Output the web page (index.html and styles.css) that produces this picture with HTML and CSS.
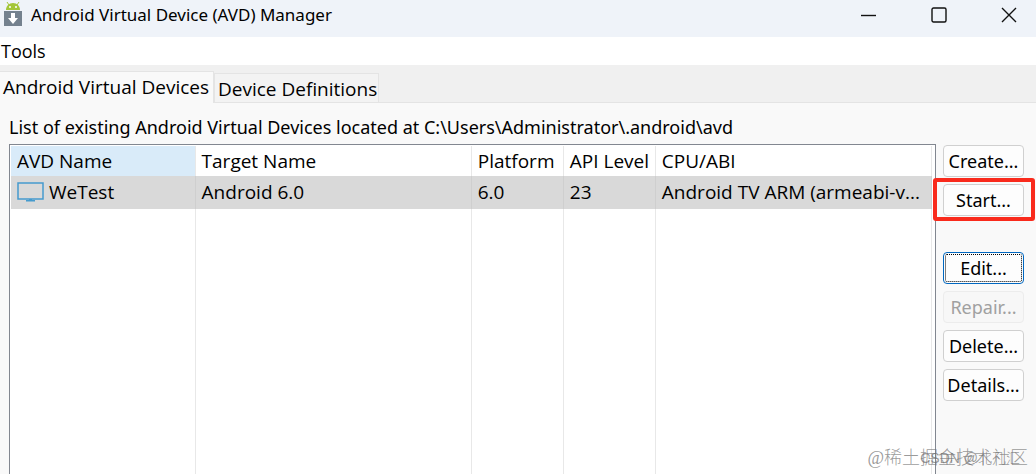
FILE: index.html
```
<!DOCTYPE html>
<html lang="en">

<head>
    <meta charset="UTF-8">
    <meta name="viewport" content="width=device-width, initial-scale=1.0">
    <title>Android Virtual Device (AVD) Manager</title>
    <link rel="stylesheet" href="styles.css">
</head>

<body>
    <header class="titlebar">
        <svg class="app-icon" width="20" height="26" viewBox="0 0 20 26">
            <path d="M4 2L6 5M16 2L14 5" stroke="#a4c639" stroke-width="1" />
            <path d="M3 10C3 6 6 3 10 3S17 6 17 10Z" fill="#a4c639" />
            <circle cx="7" cy="7" r="1" fill="#fff" />
            <circle cx="13" cy="7" r="1" fill="#fff" />
            <path d="M1 11H19V26H1Z" fill="#74818e" />
            <path d="M8 13H12V18H15L10 24L5 18H8Z" fill="#fff" />
        </svg>
        <h1>Android Virtual Device (AVD) Manager</h1>
        <div class="window-buttons">
            <button type="button" aria-label="Minimize">
                <svg width="16" height="16" viewBox="0 0 16 16"><path d="M0 8.5H15" /></svg>
            </button>
            <button type="button" aria-label="Maximize">
                <svg width="16" height="16" viewBox="0 0 16 16"><rect x="1" y="1" width="14" height="14" rx="1.5" /></svg>
            </button>
            <button type="button" aria-label="Close">
                <svg width="16" height="16" viewBox="0 0 16 16"><path d="M1 1L15 15M15 1L1 15" /></svg>
            </button>
        </div>
    </header>

    <nav class="menubar">
        <button type="button">Tools</button>
    </nav>

    <div class="tabs" role="tablist">
        <button type="button" class="tab active" role="tab" aria-selected="true">Android Virtual Devices</button>
        <button type="button" class="tab" role="tab" aria-selected="false">Device Definitions</button>
    </div>

    <main class="panel">
        <p class="location">List of existing Android Virtual Devices located at C:\Users\Administrator\.android\avd</p>
        <div class="content">
            <div class="list">
                <table>
                    <colgroup>
                        <col class="col-name">
                        <col class="col-target">
                        <col class="col-small">
                        <col class="col-small">
                        <col class="col-cpu">
                    </colgroup>
                    <thead>
                        <tr>
                            <th class="sorted">AVD Name</th>
                            <th>Target Name</th>
                            <th>Platform</th>
                            <th>API Level</th>
                            <th>CPU/ABI</th>
                        </tr>
                    </thead>
                    <tbody>
                        <tr class="selected">
                            <td>
                                <div class="device">
                                    <svg width="27" height="20" viewBox="0 0 27 20">
                                        <path d="M1 1H26V17H1Z" fill="none" stroke="#459bce" stroke-width="1.5" />
                                        <path d="M12 17H15V18H18V19.5H9V18H12Z" fill="#459bce" />
                                    </svg>
                                    WeTest
                                </div>
                            </td>
                            <td>Android 6.0</td>
                            <td>6.0</td>
                            <td>23</td>
                            <td>Android TV ARM (armeabi-v...</td>
                        </tr>
                        <tr class="filler">
                            <td></td>
                            <td></td>
                            <td></td>
                            <td></td>
                            <td></td>
                        </tr>
                    </tbody>
                </table>
            </div>
            <div class="actions">
                <button type="button">Create...</button>
                <button type="button" class="start">Start...</button>
                <button type="button" class="focused">Edit...</button>
                <button type="button" disabled>Repair...</button>
                <button type="button">Delete...</button>
                <button type="button">Details...</button>
            </div>
        </div>
    </main>

    <div class="watermark">@稀土掘金技术社区</div>
    <div class="watermark small">CSDN @北凡汇</div>
</body>

</html>
```
FILE: styles.css
```
* {
    box-sizing: border-box;
}

body {
    display: flex;
    flex-direction: column;
    height: 100vh;
    margin: 0;
    overflow: hidden;
    background-color: #f0f0f0;
    color: #000;
    font-family: "Open Sans", "Noto Sans", sans-serif;
    font-size: 19px;
    line-height: 24px;
}

button {
    padding: 0;
    border: none;
    background: none;
    color: inherit;
    font: inherit;
}

.titlebar {
    display: flex;
    align-items: flex-start;
    height: 37px;
    padding-left: 3px;
    background-color: #eff3f9;
}

.app-icon {
    margin-right: 8px;
}

h1 {
    margin: 0;
    padding-top: 3px;
    font-family: "Noto Sans", sans-serif;
    font-size: 17px;
    font-weight: normal;
}

.window-buttons {
    display: flex;
    margin-right: -8px;
    margin-left: auto;
}

.window-buttons button {
    display: flex;
    align-items: center;
    justify-content: center;
    width: 70px;
    height: 29px;
}

.window-buttons svg {
    fill: none;
    stroke: #111;
    stroke-width: 1.4;
}

.menubar {
    height: 28px;
    padding: 2px 1px;
    background-color: #fff;
    font-size: 18px;
}

.tabs {
    display: flex;
    align-items: flex-end;
    height: 38px;
    border-bottom: 1px solid #e4e4e4;
}

.tab {
    height: 29px;
    padding: 2px 1px 0 3px;
    border: 1px solid #e4e4e4;
    border-bottom: none;
    background-color: #f3f3f3;
}

.tab.active {
    height: 32px;
    margin-bottom: -1px;
    padding: 0 4px 2px 3px;
    border-left: none;
    background-color: #f9f9f9;
}

.panel {
    display: flex;
    flex: 1;
    flex-direction: column;
    min-height: 0;
    padding-left: 9px;
    background-color: #f9f9f9;
}

.location {
    margin: 0;
    padding: 12px 0 5px;
    font-family: "Noto Sans", sans-serif;
    font-size: 18px;
}

.content {
    display: flex;
    flex: 1;
    min-height: 0;
}

.list {
    flex: 1;
    padding: 1px 3px 0 1px;
    border: 1px solid #828790;
    border-bottom: none;
    background-color: #fff;
}

table {
    width: 100%;
    height: 100%;
    border-collapse: collapse;
    table-layout: fixed;
}

.col-name {
    width: 20%;
}

.col-target {
    width: 30%;
}

.col-small {
    width: 10%;
}

.col-cpu {
    width: 30%;
}

th,
td {
    height: 33px;
    padding: 0 0 1px 6px;
    border-right: 1px solid #e8e8e8;
    font-weight: normal;
    text-align: left;
    white-space: nowrap;
}

th {
    height: 30px;
    padding-bottom: 0;
}

.sorted {
    background-color: #d9ebf9;
}

.selected {
    background-color: #d9d9d9;
}

.selected td {
    border-color: #cfcfcf;
}

.filler td {
    height: auto;
}

.device {
    display: flex;
    align-items: center;
    gap: 5px;
}

.actions {
    display: flex;
    flex-direction: column;
    gap: 7px;
    width: 100px;
    padding: 1px 12px 0 7px;
    font-family: "Noto Sans", sans-serif;
    font-size: 18px;
}

.actions button {
    height: 32px;
    border: 1px solid #d0d0d0;
    border-radius: 4px;
    background-color: #fdfdfd;
}

.actions .start {
    position: relative;
    margin-bottom: 29px;
}

/* highlight frame round the Start button */
.start::after {
    content: "";
    position: absolute;
    inset: -7px -12px -6px -11px;
    border: 4px solid #f92a1c;
    border-radius: 3px;
}

.actions .focused {
    border-color: #0067c0;
    outline: 1px dotted #000;
    outline-offset: -3px;
}

.actions button:disabled {
    border-color: #ececec;
    background-color: #f7f7f7;
    color: #a0a0a0;
}

.watermark {
    position: absolute;
    right: 8px;
    bottom: 4px;
    color: rgba(110, 110, 110, 0.7);
    font-family: "Liberation Serif", "Noto Sans CJK SC", serif;
    font-weight: 300;
    font-size: 18px;
}

.watermark.small {
    right: 16px;
    font-family: "Liberation Sans", "Noto Sans CJK SC", sans-serif;
    font-size: 14px;
}
```
